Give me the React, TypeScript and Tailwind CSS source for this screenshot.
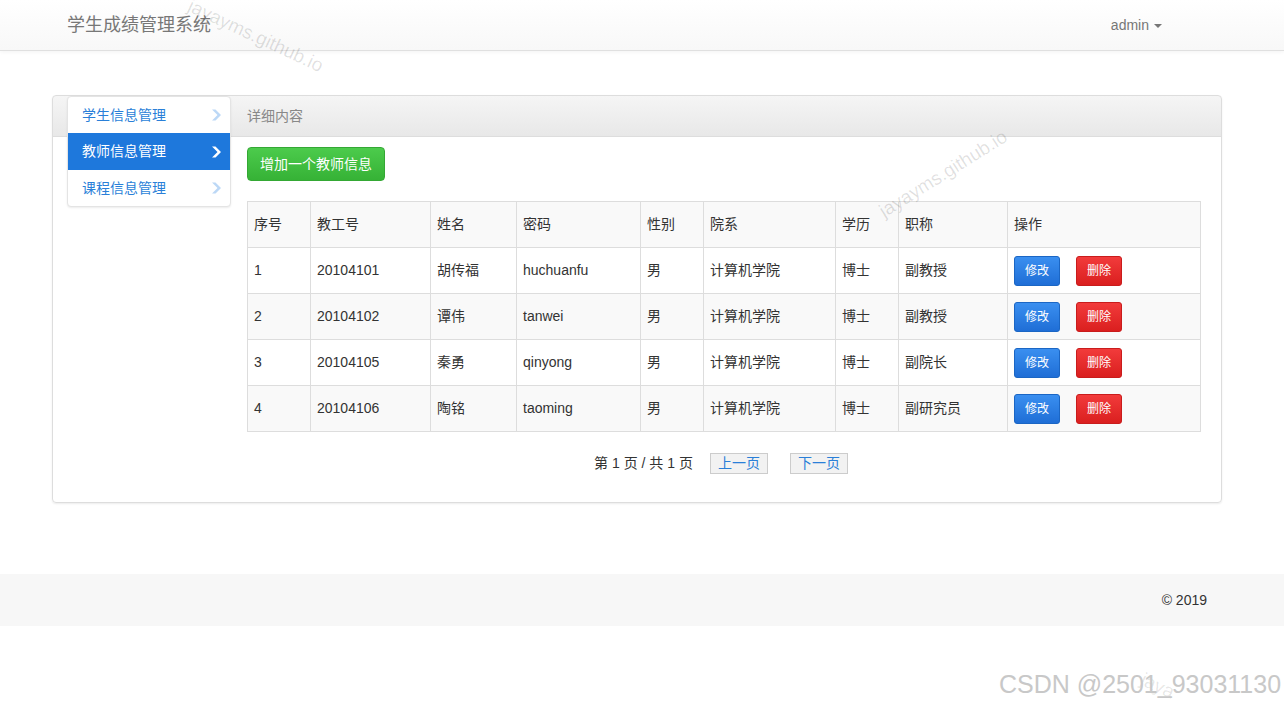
const teachers = [
  { id: 1, no: "20104101", name: "胡传福", pwd: "huchuanfu", sex: "男", dept: "计算机学院", edu: "博士", title: "副教授" },
  { id: 2, no: "20104102", name: "谭伟", pwd: "tanwei", sex: "男", dept: "计算机学院", edu: "博士", title: "副教授" },
  { id: 3, no: "20104105", name: "秦勇", pwd: "qinyong", sex: "男", dept: "计算机学院", edu: "博士", title: "副院长" },
  { id: 4, no: "20104106", name: "陶铭", pwd: "taoming", sex: "男", dept: "计算机学院", edu: "博士", title: "副研究员" },
];

const cols = [
  { label: "序号", w: "w-[63px]" },
  { label: "教工号", w: "w-[120px]" },
  { label: "姓名", w: "w-[86px]" },
  { label: "密码", w: "w-[124px]" },
  { label: "性别", w: "w-[63px]" },
  { label: "院系", w: "w-[132px]" },
  { label: "学历", w: "w-[63px]" },
  { label: "职称", w: "w-[109px]" },
  { label: "操作", w: "" },
];

const menu = ["学生信息管理", "教师信息管理", "课程信息管理"];

const cell = "border border-[#dddddd] px-[6px] h-[46px] align-middle";

// glyphicon-style bold chevron
function Chevron({ className }: { className: string }) {
  return (
    <svg width="12" height="14" viewBox="0 0 12 14" className={className}>
      <polygon points="2,1.5 5.5,1.5 11,7 5.5,12.5 2,12.5 7.5,7" fill="currentColor" />
    </svg>
  );
}

export default function App() {
  return (
    <div className="relative min-h-[704px] overflow-hidden bg-white font-['Liberation_Sans','Noto_Sans_CJK_SC',sans-serif] text-[14px] text-[#333]">
      {/* navbar */}
      <div className="h-[51px] border-b border-[#e0e0e0] bg-[linear-gradient(to_bottom,#ffffff_0%,#f8f8f8_100%)] shadow-[0_1px_4px_rgba(0,0,0,0.05)]">
        <div className="ml-[52px] flex h-[50px] w-[1170px] items-center justify-between px-[15px]">
          <span className="text-[18px] text-[#777]">学生成绩管理系统</span>
          <span className="mr-[45px] flex items-center gap-[5px] text-[#777]">
            admin
            <span className="mt-[2px] h-0 w-0 border-x-[4px] border-t-[4px] border-x-transparent border-t-[#777]" />
          </span>
        </div>
      </div>

      {/* panel */}
      <div className="ml-[52px] mt-[44px] flex w-[1170px] rounded-[4px] border border-[#dddddd] bg-[linear-gradient(to_bottom,#f5f5f5_0px,#e8e8e8_40px,#dddddd_40px,#dddddd_41px,#ffffff_41px)] shadow-[0_1px_2px_rgba(0,0,0,0.08)]">
        <div className="ml-[14px] w-[164px] shrink-0">
          <div className="overflow-hidden rounded-[4px] border border-[#e4e4e4] bg-white shadow-[0_1px_2px_rgba(0,0,0,0.08)]">
            {menu.map((m, i) => (
              <div
                key={m}
                className={
                  i === 1
                    ? "flex h-[37px] items-center justify-between bg-[#1e78dc] pl-[14px] pr-[8px] text-white"
                    : "flex h-[36px] items-center justify-between pl-[14px] pr-[8px] text-[#2a7fd8]"
                }
              >
                <span>{m}</span>
                <Chevron className={i === 1 ? "text-white" : "text-[#bcd8f6]"} />
              </div>
            ))}
          </div>
        </div>

        <div className="ml-[16px] flex-1 pr-[20px]">
          <div className="flex h-[40px] items-center text-[#888]">详细内容</div>
          <div className="pt-[11px]">
            <button className="h-[34px] w-[138px] rounded-[4px] border border-[#34a834] bg-[linear-gradient(to_bottom,#4ccb4c_0%,#36b236_100%)] text-white">
              增加一个教师信息
            </button>
          </div>
          <table className="mt-[20px] w-full border-collapse border border-[#dddddd]">
            <tbody>
              <tr className="bg-[#f9f9f9]">
                {cols.map((c) => (
                  <td key={c.label} className={`${cell} ${c.w}`}>
                    {c.label}
                  </td>
                ))}
              </tr>
              {teachers.map((t, i) => (
                <tr key={t.id} className={i % 2 === 1 ? "bg-[#f9f9f9]" : "bg-white"}>
                  <td className={cell}>{t.id}</td>
                  <td className={cell}>{t.no}</td>
                  <td className={cell}>{t.name}</td>
                  <td className={cell}>{t.pwd}</td>
                  <td className={cell}>{t.sex}</td>
                  <td className={cell}>{t.dept}</td>
                  <td className={cell}>{t.edu}</td>
                  <td className={cell}>{t.title}</td>
                  <td className={cell}>
                    <div className="flex gap-[16px]">
                      <button className="h-[30px] w-[46px] rounded-[3px] border border-[#1b66c4] bg-[linear-gradient(to_bottom,#3a8ff0_0%,#1f6ed6_100%)] text-[12px] text-white">
                        修改
                      </button>
                      <button className="h-[30px] w-[46px] rounded-[3px] border border-[#c91c1c] bg-[linear-gradient(to_bottom,#f23b3b_0%,#da1f1f_100%)] text-[12px] text-white">
                        删除
                      </button>
                    </div>
                  </td>
                </tr>
              ))}
            </tbody>
          </table>
          <div className="mt-[21px] mb-[28px] flex items-center justify-center">
            <span className="ml-[-6px]">第 1 页 / 共 1 页</span>
            <span className="ml-[17px] flex h-[21px] w-[58px] items-center justify-center border border-[#cccccc] bg-[#f2f2f2] text-[#2a7fd8]">
              上一页
            </span>
            <span className="ml-[22px] flex h-[21px] w-[58px] items-center justify-center border border-[#cccccc] bg-[#f2f2f2] text-[#2a7fd8]">
              下一页
            </span>
          </div>
        </div>
      </div>

      {/* footer */}
      <div className="mt-[71px] h-[52px] bg-[#f7f7f7]">
        <div className="ml-[52px] flex h-full w-[1170px] items-center justify-end px-[15px]">
          © 2019
        </div>
      </div>

      {/* watermarks */}
      <span className="pointer-events-none absolute left-[182px] top-[22px] rotate-[25deg] text-[19px] text-[rgba(0,0,0,0.12)]">
        jayayms.github.io
      </span>
      <span className="pointer-events-none absolute left-[870px] top-[160px] rotate-[-32deg] text-[19px] text-[rgba(0,0,0,0.12)]">
        jayayms.github.io
      </span>
      <span className="pointer-events-none absolute left-[1140px] top-[672px] rotate-[25deg] text-[19px] text-[rgba(0,0,0,0.1)]">
        jaya
      </span>
      <span className="pointer-events-none absolute left-[999px] top-[666px] text-[25px] text-[#c8c8c8]">
        CSDN @2501_93031130
      </span>
    </div>
  );
}
